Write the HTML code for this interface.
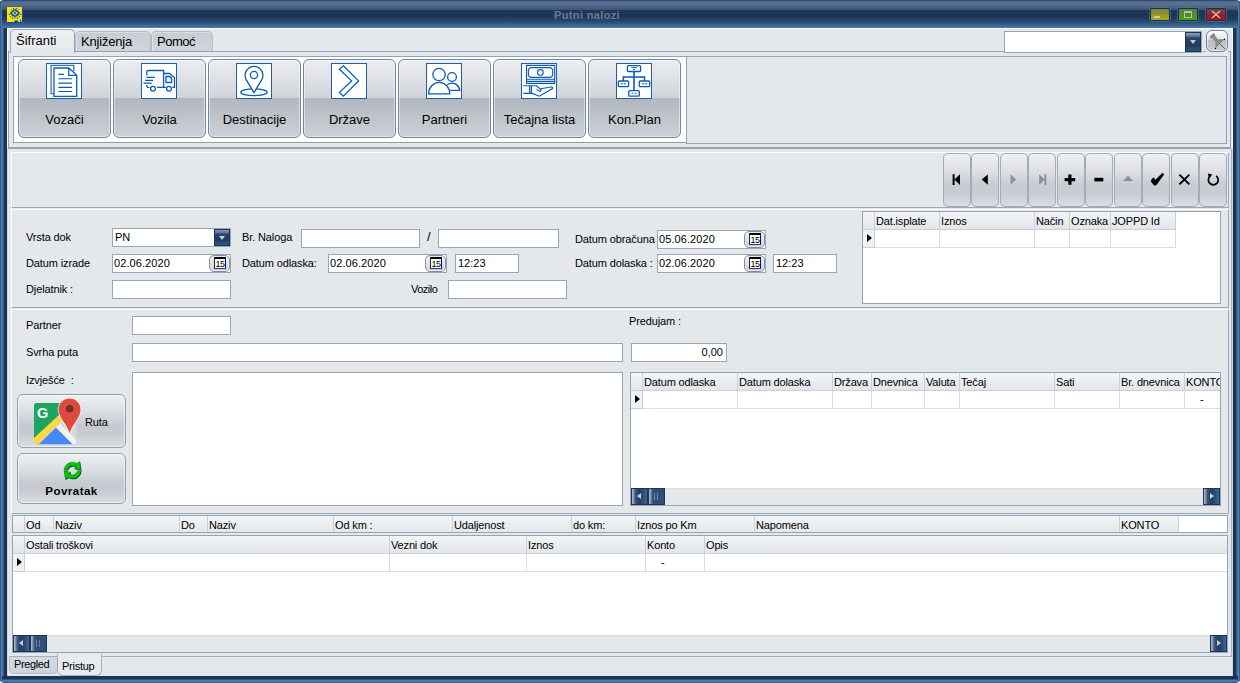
<!DOCTYPE html>
<html><head><meta charset="utf-8"><title>Putni nalozi</title>
<style>
*{box-sizing:border-box;margin:0;padding:0}
html,body{width:1240px;height:683px;overflow:hidden;background:#fff}
body{font-family:"Liberation Sans",sans-serif;font-size:11px;color:#000;position:relative}
.a{position:absolute}
.t{position:absolute;white-space:nowrap;line-height:13px;height:13px;letter-spacing:-.12px}
#under{left:0;top:0;width:1240px;height:683px;border-radius:5px 5px 5px 5px/2px 2px 3px 3px;background:#24416a}
#win{left:0;top:0;width:1240px;height:683px;border-radius:5px;
 background:linear-gradient(90deg,#35608c 0,#35608c 1px,#4a7ba5 1px,#4a7ba5 3px,#2f5580 3px,#2f5580 4px,#1f3358 4px,#1f3358 1236px,#2f5580 1236px,#2f5580 1237px,#4a7ba5 1237px,#4a7ba5 1239px,#35608c 1239px)}
#title{left:2px;top:0;width:1236px;height:28px;border-radius:4px 4px 0 0;
 background:linear-gradient(180deg,#2b4b73 0,#2b4b73 1px,#52698a 1.5px,#5b7393 4px,#4a6383 7px,#3d5676 9.5px,#20365a 10px,#1f3558 16px,#243e63 19px,#2c4c75 22px,#3a628d 25px,#4a7ba6 28px)}
#bot{left:2px;top:676px;width:1236px;height:7px;border-radius:0 0 4px 4px;background:linear-gradient(180deg,#1f3358 0,#1f3358 3px,#2f5580 3px,#2f5580 4px,#4a7ba5 4px,#4a7ba5 6px,#35608c 6px)}
#client{left:7px;top:28px;width:1226px;height:648px;background:#e4e8eb;border-top:1px solid #fff}
.inp{position:absolute;background:#fff;border:1px solid #9aa7b8;height:19px}
.inp span{position:absolute;left:2px;top:2px;line-height:13px;white-space:nowrap}
.tab{position:absolute;border:1px solid #93a3b8;border-bottom:none;border-radius:5px 5px 0 0;font-size:13px}
.tab span{position:absolute;top:4px;line-height:15px;white-space:nowrap}
.tab.on{background:linear-gradient(180deg,#eef0f2,#e4e8eb)}
.tab.off{background:linear-gradient(180deg,#c7ccd4,#d1d5db);border-color:#b4bdc9;box-shadow:inset 1px 1px 0 rgba(255,255,255,.35)}
.rb{position:absolute;top:59px;width:93px;height:79px;border:1px solid #74869f;border-radius:6px;
 background:linear-gradient(180deg,#eceef0 0,#d0d4da 37.5px,#b2b7bf 38px,#cdd1d7 78px);box-shadow:inset 0 0 0 1px rgba(255,255,255,.45)}
.rb .ic{position:absolute;left:27px;top:3px;width:36px;height:36px;background:#fff;border:1px solid #1c5fae}
.rb .ic svg{position:absolute;left:-1px;top:-1px}
.rb .lb{position:absolute;left:0;width:91px;top:52px;text-align:center;font-size:13px;line-height:15px;white-space:nowrap}
.nb{position:absolute;top:153px;width:28px;height:54px;border:1px solid #a3adba;border-radius:5px;
 background:linear-gradient(180deg,#eff0f2 0,#dfe1e5 30%,#c9cdd3 58%,#c8ccd2 75%,#dadde1 100%)}
.nb svg{position:absolute;left:-1px;top:-1px}
.pnl{position:absolute;border:1px solid;border-color:#fff #9aa8b8 #9aa8b8 #fff}
.grid{position:absolute;overflow:hidden;background:#fff;border:1px solid #93a3b8}
.gh{position:absolute;height:18px;background:linear-gradient(180deg,#f4f5f7,#e2e6ea);border-right:1px solid #c9d0da;border-bottom:1px solid #c9d0da}
.gh span{position:absolute;left:1px;top:3px;line-height:13px;white-space:nowrap;letter-spacing:-.15px}
.gc{position:absolute;height:18px;border-right:1px solid #d8dde4;border-bottom:1px solid #d8dde4}
.gc.ind{background:#f0f2f4;border-color:#c9d0da}
.arr{position:absolute;left:4px;top:22px;width:0;height:0;border:4.5px solid transparent;border-left:5px solid #000;border-right:none}
.sb{position:absolute;height:17px;background:linear-gradient(180deg,#d5dae0 0,#e4e8eb 2px)}
.sbb{position:absolute;top:0;height:17px;border:1px solid #1f3358;background:linear-gradient(90deg,#b4c0d0 0,#8296b2 1.5px,#3a5678 3.5px,#233c60 7px,#2c4d75 11px,#3c6893 15px)}
.sbb.th{background:linear-gradient(90deg,#b4c0d0 0,#8296b2 1.5px,#3a5678 3.5px,#2f4f77 6px,#2f4f77 15px)}
.btn{position:absolute;border:1px solid #919dad;border-radius:6px;background:linear-gradient(180deg,#eff0f2 0,#dcdfe3 30%,#c6cad0 60%,#c8ccd2 75%,#dadde1 100%);box-shadow:inset 0 0 0 1px rgba(255,255,255,.5)}
.cal{position:absolute;right:0px;top:0px;width:21px;height:17px;border:1px solid #7f8da0;border-radius:5px;background:linear-gradient(180deg,#f4f5f6,#c9cdd3);box-shadow:inset 0 0 0 1px #e8eaed}
.cal svg{position:absolute;left:4px;top:1px}
.dd{position:absolute;right:0;top:0;width:16px;height:17px;border:1px solid #1f3358;background:linear-gradient(180deg,#8296b2 0,#5a7496 3px,#2a4468 4px,#213a5e 10px,#2f5f8d 15px)}
.dd:after{content:"";position:absolute;left:4px;top:6px;border:3.5px solid transparent;border-top:4px solid #c9d0dc;border-bottom:none}
.sbb b{position:absolute;display:block}
.sbb .al{left:5px;top:4px;border:3.5px solid transparent;border-right:4px solid #c5cbd8;border-left:none}
.sbb .ar{left:6px;top:4px;border:3.5px solid transparent;border-left:4px solid #c5cbd8;border-right:none}
.sbb .gr{left:5px;top:4px;width:4px;height:7px;border-left:1px solid #6d7f9c;border-right:1px solid #6d7f9c}
.wb{position:absolute;top:8px;width:20px;height:13px;border:1px solid #1b2f4f;box-shadow:0 0 0 1px rgba(90,120,155,.55);border-radius:1px}
.wb i{position:absolute;display:block}
</style></head><body>
<div id="under" class="a"></div><div id="win" class="a"></div><div id="title" class="a"></div><div id="bot" class="a"></div><div id="client" class="a"></div>
<div class="t" style="left:554px;top:9px;font-weight:bold;color:#6b7b8d;font-size:11px;letter-spacing:.36px">Putni nalozi</div>
<svg class="a" style="left:7px;top:7px" width="16" height="16" viewBox="0 0 16 16"><rect width="16" height="16" fill="#ffe400"/><path d="M15.5,0V15.5H0" stroke="#0a49c8" fill="none"/><g fill="#0b50cc"><path d="M8,2L13.4,5.8L8,10.4L2.6,5.8Z"/><path d="M5,3.4L8,1.6L11,3.4L12.6,7.4L10.4,9.6L5.6,9.6L3.4,7.4Z" fill-opacity=".75"/><circle cx="6.5" cy="1.4" r=".6"/><circle cx="9.6" cy="1.4" r=".6"/><circle cx="4.4" cy="2.6" r=".5"/><circle cx="11.6" cy="2.6" r=".5"/><circle cx="2.2" cy="7.4" r=".7"/><circle cx="13.8" cy="7.4" r=".7"/><circle cx="3.6" cy="9.6" r=".7"/><circle cx="12.4" cy="9.6" r=".7"/><circle cx="5.6" cy="11.2" r=".8"/><circle cx="10.4" cy="11.2" r=".8"/><circle cx="8" cy="11" r=".6"/></g><path d="M8,3.6L11.2,5.9L8,8.6L4.8,5.9Z" fill="#ffe400"/><path d="M8,4.6L9.6,5.9L8,7.3L6.4,5.9Z" fill="#0b50cc"/><rect x="7.5" y="13.4" width="3.6" height="1.6" fill="#0a49c8"/><rect x="13" y="12.6" width="1.2" height="2.6" fill="#0a49c8"/></svg>
<div class="wb" style="left:1150px;background:linear-gradient(180deg,#7f8548 0,#878b3a 5px,#9b991f 5.5px,#aaa519 11px)"><i style="left:3px;top:7px;width:6px;height:2px;background:#c6c6ae"></i></div>
<div class="wb" style="left:1178px;background:linear-gradient(180deg,#5f7f4b 0,#58823a 5px,#4c9120 5.5px,#4e9d18 11px)"><i style="left:5px;top:2px;width:8px;height:7px;border:1px solid #b4c4a3;border-top-width:2px"></i></div>
<div class="wb" style="left:1206px;background:linear-gradient(180deg,#7c4042 0,#813436 5px,#961f22 5.5px,#a6191b 11px)"><svg width="18" height="11" style="position:absolute;left:0;top:0"><path d="M5,2L13,9M13,2L5,9" stroke="#d6bebe" stroke-width="1.4"/></svg></div>
<div class="a" style="left:7px;top:28px;width:1px;height:120px;background:#fff"></div>
<div class="a" style="left:1232px;top:28px;width:1px;height:120px;background:#f4f6f7"></div>
<div class="a" style="left:7px;top:149px;width:1px;height:527px;background:#cdd4dc"></div>
<div class="a" style="left:1232px;top:149px;width:1px;height:527px;background:#cdd4dc"></div>
<div class="a" style="left:1231px;top:149px;width:1px;height:508px;background:#a3afc0"></div>
<div class="a" style="left:8px;top:51px;width:996px;height:1px;background:#93a3b8"></div>
<div class="a" style="left:1203px;top:51px;width:3px;height:1px;background:#93a3b8"></div>
<div class="a" style="left:1228px;top:51px;width:3px;height:1px;background:#93a3b8"></div>
<div class="a" style="left:8px;top:51px;width:1px;height:97px;background:#93a3b8"></div>
<div class="a" style="left:1230px;top:51px;width:1px;height:97px;background:#93a3b8"></div>
<div class="a" style="left:8px;top:147px;width:1223px;height:2px;background:#93a3b8"></div>
<div class="tab off" style="left:75px;top:31px;width:76px;height:20px"><span style="left:5px;top:2px;letter-spacing:-.2px">Knjiženja</span></div>
<div class="tab off" style="left:151px;top:31px;width:62px;height:20px"><span style="left:5px;top:2px;letter-spacing:-.5px">Pomoć</span></div>
<div class="tab on" style="left:10px;top:29px;width:65px;height:24px"><span style="left:5px;top:3px">Šifranti</span></div>
<div class="a" style="left:1004px;top:31px;width:198px;height:22px;background:#fff;border:1px solid #93a3b8"></div>
<div class="a" style="left:1185px;top:32px;width:16px;height:20px;border:1px solid #1f3358;background:linear-gradient(180deg,#8ea1bb 0,#5f7a9c 3px,#2a4468 5px,#213a5e 12px,#35597f 19px)"></div>
<div class="a" style="left:1190px;top:40px;width:0;height:0;border:3.5px solid transparent;border-top:4px solid #c9d0dc;border-bottom:none"></div>
<div class="a" style="left:1206px;top:30px;width:22px;height:22px;border:1px solid #6b82a0;border-radius:6px;background:linear-gradient(180deg,#fafbfb 0,#e4e6e9 8px,#b9bec6 9px,#c9cdd3 20px);box-shadow:inset 0 0 0 1px rgba(255,255,255,.6)"></div>
<svg class="a" style="left:1206px;top:30px" width="22" height="22" viewBox="1206 30 22 22"><path d="M1220,44L1225,49" stroke="#555" stroke-width="1"/><path d="M1209.2,37L1213.6,33L1215.3,34.6L1215,35.6L1217.7,39.3L1224.4,39.3L1215.5,48.4L1215.3,41.6L1211.8,38.6L1210.8,38.7Z" fill="#8a8a8a"/><circle cx="1224.4" cy="39.3" r=".7" fill="#000"/><circle cx="1215.5" cy="48.4" r=".7" fill="#000"/></svg>
<div class="a" style="left:13px;top:56px;width:674px;height:87px;background:#fff;border:1px solid #93a3b8;border-bottom-color:#9a9a9a"></div>
<div class="a" style="left:686px;top:56px;width:541px;height:88px;border:1px solid #93a3b8"></div>
<div class="rb" style="left:18px"><div class="ic"><svg width="36" height="36" viewBox="0 0 36 36" fill="none" stroke="#0d5bb0" stroke-width="1.3"><path d="M8,30.7H5.1V2.3H27.8V8" stroke-opacity=".85"/><path d="M8,5H22.8L30.7,12.4V33.3H8Z" fill="#fff"/><path d="M22.8,5V12.4H30.7" /><path d="M12.4,11.4H18M12.4,15.8H26M12.4,20.1H26M12.4,24.4H26M12.4,28.5H26" stroke-width="1.1"/></svg></div><div class="lb">Vozači</div></div>
<div class="rb" style="left:113px"><div class="ic"><svg width="36" height="36" viewBox="0 0 36 36" fill="none" stroke="#0d5bb0" stroke-width="1.3"><path d="M5.8,12.6V9Q5.8,7.5 7.3,7.5H22.6V24.3"/><path d="M5.5,14.3H13.8M4,17.3H12.2M2.5,20.2H10.6"/><path d="M5.8,22V23.3Q5.8,24.3 6.8,24.3H8.5"/><circle cx="12" cy="25.8" r="2.4"/><circle cx="28" cy="25.8" r="2.4"/><path d="M16,24.3H25"/><path d="M22.6,10.5H28.5L33.5,14.5V24.3H31.3"/><path d="M25,13.5H28.3Q30.6,14 30.6,16.5V19.5H25Z"/></svg></div><div class="lb">Vozila</div></div>
<div class="rb" style="left:208px"><div class="ic"><svg width="36" height="36" viewBox="0 0 36 36" fill="none" stroke="#0d5bb0" stroke-width="1.3"><ellipse cx="18" cy="29.3" rx="13.2" ry="3.4"/><path d="M18,29.6L10.3,16.8A8.9,8.9 0 1 1 25.7,16.8Z" fill="#fff"/><circle cx="18" cy="12" r="3.6"/></svg></div><div class="lb">Destinacije</div></div>
<div class="rb" style="left:303px"><div class="ic"><svg width="36" height="36" viewBox="0 0 36 36" fill="none" stroke="#0d5bb0" stroke-width="1.3"><path d="M12.4,2.8L27.5,17.9L12.4,33.2L8.4,29.4L20.6,17.9L8.4,6.3Z"/></svg></div><div class="lb">Države</div></div>
<div class="rb" style="left:398px"><div class="ic"><svg width="36" height="36" viewBox="0 0 36 36" fill="none" stroke="#0d5bb0" stroke-width="1.3"><circle cx="26" cy="14" r="4.4"/><path d="M21.3,21.6Q26,18.6 30.2,21.4Q33.5,23.8 33.8,27.3H24.2"/><circle cx="13.05" cy="11.5" r="6.2" fill="#fff"/><path d="M2.6,30.8A10.6,11.4 0 0 1 23.8,30.8Z" fill="#fff"/></svg></div><div class="lb">Partneri</div></div>
<div class="rb" style="left:493px"><div class="ic"><svg width="36" height="36" viewBox="0 0 36 36" fill="none" stroke="#0d5bb0" stroke-width="1.15"><path d="M5.5,2.4H33.7V20.4H5.5ZM5.5,16.2H33.7M5.5,18.3H33.7"/><path d="M9.4,4.6H29.7L31.7,6.6V12.4L29.7,14.4H9.4L7.4,12.4V6.6Z"/><circle cx="19.4" cy="9.4" r="2.8"/><path d="M2.2,22.7H15.4L19.6,26.2Q20.6,27.6 19.2,28.3Q18,28.6 15.6,26.2M2.2,30.4H11.4L18.3,33.2L31.5,25.6Q31.8,23.6 29.6,24L20,25.8M8.7,22.7V30.4M10.4,22.7V30.4"/></svg></div><div class="lb">Tečajna lista</div></div>
<div class="rb" style="left:588px"><div class="ic"><svg width="36" height="36" viewBox="0 0 36 36" fill="none" stroke="#0d5bb0" stroke-width="1.3"><rect x="11.4" y="2.6" width="13.2" height="5.9" rx="1"/><path d="M15.4,4.6H21M17,6.5H19" stroke-width="1"/><path d="M18,8.5V27.6M7.4,18V14H28.5V18" stroke-width="1.6"/><rect x="2.3" y="18" width="10.3" height="5.7" rx="1"/><rect x="23.3" y="18" width="10.4" height="5.7" rx="1"/><rect x="12.8" y="27.6" width="10.5" height="5.6" rx="1"/><path d="M5,20.8H10M26,20.8H31M15.5,30.4H20.5" stroke-width="1.4" stroke-opacity=".7" stroke-dasharray="2 1"/></svg></div><div class="lb">Kon.Plan</div></div>
<div class="pnl" style="left:11px;top:152px;width:1218px;height:56px"></div>
<div class="pnl" style="left:11px;top:209px;width:1218px;height:99px"></div>
<div class="pnl" style="left:11px;top:309px;width:1218px;height:205px"></div>
<div class="nb" style="left:943px"><svg width="28" height="54"><rect x="9.6" y="21.2" width="2" height="10.8" fill="#000"/><path d="M11.4,26.6L17,21.2V32Z" fill="#000"/></svg></div>
<div class="nb" style="left:971px"><svg width="28" height="54"><path d="M10.7,26.6L16.8,21.4V31.8Z" fill="#000"/></svg></div>
<div class="nb" style="left:1000px"><svg width="28" height="54"><path d="M16.2,26.6L10.6,21.4V31.8Z" fill="#8b9097"/></svg></div>
<div class="nb" style="left:1028px"><svg width="28" height="54"><rect x="16.4" y="21.2" width="1.8" height="10.8" fill="#8b9097"/><path d="M16.6,26.6L11.2,21.2V32Z" fill="#8b9097"/></svg></div>
<div class="nb" style="left:1057px"><svg width="28" height="54"><path d="M7.6,26.7H18.2M12.9,21.6V31.8" stroke="#000" stroke-width="3.2"/></svg></div>
<div class="nb" style="left:1085px"><svg width="28" height="54"><rect x="9.3" y="24.8" width="9" height="3.6" fill="#000"/></svg></div>
<div class="nb" style="left:1114px"><svg width="28" height="54"><path d="M14,22.4L19,28H9Z" fill="#8b9097"/></svg></div>
<div class="nb" style="left:1142px"><svg width="28" height="54"><polygon points="9.3,27.2 11.5,24.7 13.3,27.2 20.4,20.3 21.8,21.3 14.4,31.7 12.2,32.2 9.4,28.8" fill="#000" stroke="#000" stroke-width=".7" stroke-linejoin="round"/></svg></div>
<div class="nb" style="left:1171px"><svg width="28" height="54"><path d="M8.4,21.6L18.4,31.4M18.4,21.6L8.4,31.4" stroke="#000" stroke-width="1.9"/></svg></div>
<div class="nb" style="left:1199px"><svg width="28" height="54"><path d="M17.1,22.9A4.9,4.9 0 1 1 11.5,22.9" stroke="#000" stroke-width="1.7" fill="none"/><path d="M8.8,20.6L13.4,21.4L10.0,25.2Z" fill="#000"/></svg></div>
<div class="t" style="left:26px;top:231px;">Vrsta dok</div>
<div class="inp" style="left:112px;top:228px;width:119px;height:19px"><span>PN</span><div class="dd"></div></div>
<div class="t" style="left:242px;top:231px;">Br. Naloga</div>
<div class="inp" style="left:301px;top:229px;width:119px;height:19px"></div>
<div class="t" style="left:427px;top:230px;font-size:13px">/</div>
<div class="inp" style="left:438px;top:229px;width:121px;height:19px"></div>
<div class="t" style="left:575px;top:233px;">Datum obračuna</div>
<div class="inp" style="left:657px;top:230px;width:109px;height:19px"><span style="left:1px;letter-spacing:.08px">05.06.2020</span><div class="cal"><svg width="12" height="12"><rect x="0" y="0" width="12" height="12" fill="#fff"/><rect width="12" height="2" fill="#000"/><rect width="1" height="12" fill="#222"/><rect x="11" y="1" width="1" height="11" fill="#0a0a90"/><rect x="0" y="11" width="12" height="1" fill="#33337a"/><text x="6" y="10" font-size="9" text-anchor="middle" font-family="Liberation Sans,sans-serif" letter-spacing="-0.6">15</text></svg></div></div>
<div class="t" style="left:26px;top:257px;">Datum izrade</div>
<div class="inp" style="left:112px;top:254px;width:119px;height:19px"><span style="left:1px;letter-spacing:.08px">02.06.2020</span><div class="cal"><svg width="12" height="12"><rect x="0" y="0" width="12" height="12" fill="#fff"/><rect width="12" height="2" fill="#000"/><rect width="1" height="12" fill="#222"/><rect x="11" y="1" width="1" height="11" fill="#0a0a90"/><rect x="0" y="11" width="12" height="1" fill="#33337a"/><text x="6" y="10" font-size="9" text-anchor="middle" font-family="Liberation Sans,sans-serif" letter-spacing="-0.6">15</text></svg></div></div>
<div class="t" style="left:242px;top:257px;">Datum odlaska:</div>
<div class="inp" style="left:328px;top:254px;width:119px;height:19px"><span style="left:1px;letter-spacing:.08px">02.06.2020</span><div class="cal"><svg width="12" height="12"><rect x="0" y="0" width="12" height="12" fill="#fff"/><rect width="12" height="2" fill="#000"/><rect width="1" height="12" fill="#222"/><rect x="11" y="1" width="1" height="11" fill="#0a0a90"/><rect x="0" y="11" width="12" height="1" fill="#33337a"/><text x="6" y="10" font-size="9" text-anchor="middle" font-family="Liberation Sans,sans-serif" letter-spacing="-0.6">15</text></svg></div></div>
<div class="inp" style="left:455px;top:254px;width:64px;height:19px"><span>12:23</span></div>
<div class="t" style="left:575px;top:257px;">Datum dolaska :</div>
<div class="inp" style="left:657px;top:254px;width:109px;height:19px"><span style="left:1px;letter-spacing:.08px">02.06.2020</span><div class="cal"><svg width="12" height="12"><rect x="0" y="0" width="12" height="12" fill="#fff"/><rect width="12" height="2" fill="#000"/><rect width="1" height="12" fill="#222"/><rect x="11" y="1" width="1" height="11" fill="#0a0a90"/><rect x="0" y="11" width="12" height="1" fill="#33337a"/><text x="6" y="10" font-size="9" text-anchor="middle" font-family="Liberation Sans,sans-serif" letter-spacing="-0.6">15</text></svg></div></div>
<div class="inp" style="left:773px;top:254px;width:64px;height:19px"><span>12:23</span></div>
<div class="t" style="left:26px;top:283px;">Djelatnik :</div>
<div class="inp" style="left:112px;top:280px;width:119px;height:19px"></div>
<div class="t" style="left:411px;top:283px;letter-spacing:-.5px">Vozilo</div>
<div class="inp" style="left:448px;top:280px;width:119px;height:19px"></div>
<div class="t" style="left:26px;top:319px;">Partner</div>
<div class="inp" style="left:132px;top:316px;width:99px;height:19px"></div>
<div class="t" style="left:629px;top:315px;">Predujam :</div>
<div class="t" style="left:26px;top:346px;">Svrha puta</div>
<div class="inp" style="left:132px;top:343px;width:491px;height:19px"></div>
<div class="inp" style="left:631px;top:343px;width:96px;height:19px"><span style="left:auto;right:3px">0,00</span></div>
<div class="t" style="left:26px;top:374px;">Izvješće&nbsp; :</div>
<div class="inp" style="left:132px;top:372px;width:491px;height:134px"></div>
<div class="grid" style="left:862px;top:211px;width:359px;height:93px;border-color:#93a3b8">
<div class="gh" style="left:0px;top:0;width:12px"><span></span></div><div class="gc ind" style="left:0px;top:18px;width:12px"></div>
<div class="gh" style="left:12px;top:0;width:65px"><span>Dat.isplate</span></div><div class="gc" style="left:12px;top:18px;width:65px"></div>
<div class="gh" style="left:77px;top:0;width:95px"><span>Iznos</span></div><div class="gc" style="left:77px;top:18px;width:95px"></div>
<div class="gh" style="left:172px;top:0;width:35px"><span>Način</span></div><div class="gc" style="left:172px;top:18px;width:35px"></div>
<div class="gh" style="left:207px;top:0;width:41px"><span>Oznaka</span></div><div class="gc" style="left:207px;top:18px;width:41px"></div>
<div class="gh" style="left:248px;top:0;width:65px"><span>JOPPD Id</span></div><div class="gc" style="left:248px;top:18px;width:65px"></div>
<div class="arr"></div>
</div>
<div class="grid" style="left:630px;top:372px;width:591px;height:134px;border-color:#93a3b8">
<div class="gh" style="left:0px;top:0;width:12px"><span></span></div><div class="gc ind" style="left:0px;top:18px;width:12px"></div>
<div class="gh" style="left:12px;top:0;width:95px"><span>Datum odlaska</span></div><div class="gc" style="left:12px;top:18px;width:95px"></div>
<div class="gh" style="left:107px;top:0;width:95px"><span>Datum dolaska</span></div><div class="gc" style="left:107px;top:18px;width:95px"></div>
<div class="gh" style="left:202px;top:0;width:39px"><span>Država</span></div><div class="gc" style="left:202px;top:18px;width:39px"></div>
<div class="gh" style="left:241px;top:0;width:53px"><span>Dnevnica</span></div><div class="gc" style="left:241px;top:18px;width:53px"></div>
<div class="gh" style="left:294px;top:0;width:35px"><span>Valuta</span></div><div class="gc" style="left:294px;top:18px;width:35px"></div>
<div class="gh" style="left:329px;top:0;width:95px"><span>Tečaj</span></div><div class="gc" style="left:329px;top:18px;width:95px"></div>
<div class="gh" style="left:424px;top:0;width:65px"><span>Sati</span></div><div class="gc" style="left:424px;top:18px;width:65px"></div>
<div class="gh" style="left:489px;top:0;width:65px"><span>Br. dnevnica</span></div><div class="gc" style="left:489px;top:18px;width:65px"></div>
<div class="gh" style="left:554px;top:0;width:41px"><span>KONTO</span></div><div class="gc" style="left:554px;top:18px;width:41px"><span class="t" style="left:15px;top:2px">-</span></div>
<div class="arr"></div>
<div class="sb" style="left:0;bottom:0;width:589px"><div class="sbb" style="left:0;width:17px"><b class="al"></b></div><div class="sbb th" style="left:17px;width:17px"><b class="gr"></b></div><div class="sbb" style="right:0;width:17px"><b class="ar"></b></div></div>
</div>
<div class="grid" style="left:12px;top:515px;width:1216px;height:18px;border-color:#93a3b8">
<div class="gh" style="left:0px;top:0;width:12px"><span></span></div><div class="gh" style="left:12px;top:0;width:29px"><span>Od</span></div><div class="gh" style="left:41px;top:0;width:126px"><span>Naziv</span></div><div class="gh" style="left:167px;top:0;width:28px"><span>Do</span></div><div class="gh" style="left:195px;top:0;width:126px"><span>Naziv</span></div><div class="gh" style="left:321px;top:0;width:119px"><span>Od km :</span></div><div class="gh" style="left:440px;top:0;width:119px"><span>Udaljenost</span></div><div class="gh" style="left:559px;top:0;width:64px"><span>do km:</span></div><div class="gh" style="left:623px;top:0;width:119px"><span>Iznos po Km</span></div><div class="gh" style="left:742px;top:0;width:365px"><span>Napomena</span></div><div class="gh" style="left:1107px;top:0;width:59px"><span>KONTO</span></div></div>
<div class="grid" style="left:12px;top:535px;width:1216px;height:118px;border-color:#93a3b8">
<div class="gh" style="left:0px;top:0;width:12px"><span></span></div><div class="gc ind" style="left:0px;top:18px;width:12px"></div>
<div class="gh" style="left:12px;top:0;width:365px"><span>Ostali troškovi</span></div><div class="gc" style="left:12px;top:18px;width:365px"></div>
<div class="gh" style="left:377px;top:0;width:137px"><span>Vezni dok</span></div><div class="gc" style="left:377px;top:18px;width:137px"></div>
<div class="gh" style="left:514px;top:0;width:119px"><span>Iznos</span></div><div class="gc" style="left:514px;top:18px;width:119px"></div>
<div class="gh" style="left:633px;top:0;width:59px"><span>Konto</span></div><div class="gc" style="left:633px;top:18px;width:59px"><span class="t" style="left:15px;top:2px">-</span></div>
<div class="gh" style="left:692px;top:0;width:523px"><span>Opis</span></div><div class="gc" style="left:692px;top:18px;width:523px"></div>
<div class="arr"></div>
<div class="sb" style="left:0;bottom:0;width:1214px"><div class="sbb" style="left:0;width:17px"><b class="al"></b></div><div class="sbb th" style="left:17px;width:17px"><b class="gr"></b></div><div class="sbb" style="right:0;width:17px"><b class="ar"></b></div></div>
</div>
<div class="btn" style="left:17px;top:394px;width:109px;height:54px"></div>
<div class="t" style="left:85px;top:416px;">Ruta</div>
<div class="btn" style="left:17px;top:453px;width:109px;height:51px"></div>
<div class="t" style="left:17px;top:484px;width:109px;text-align:center;font-weight:bold;font-size:11.6px;letter-spacing:.42px">Povratak</div>
<div class="a" style="left:101px;top:656px;width:1130px;height:1px;background:#a3afc0"></div>
<div class="a" style="left:9px;top:656px;width:49px;height:18px;border:1px solid #b4bdc9;border-top:1px solid #a3afc0;border-radius:0 0 5px 5px;background:linear-gradient(180deg,#d6dadf,#cfd4da)"></div>
<div class="t" style="left:14px;top:658px;letter-spacing:-.4px">Pregled</div>
<div class="a" style="left:57px;top:654px;width:45px;height:22px;border:1px solid #a3afc0;border-top:none;border-radius:0 0 6px 6px;background:#e9ecef"></div>
<div class="t" style="left:62px;top:660px;letter-spacing:-.25px">Pristup</div>
<svg class="a" style="left:30px;top:398px" width="56" height="50" viewBox="30 398 56 50">
<defs><clipPath id="mc"><rect x="34" y="403" width="42.4" height="41.4" rx="3"/></clipPath></defs>
<g clip-path="url(#mc)"><rect x="34" y="403" width="43" height="42" fill="#d9d9d9"/><path d="M34,403H77V403L34,440Z" fill="#1ea362"/><path d="M34,438L60,414L64,418.5L38,444.6H34Z" fill="#fbd646"/><path d="M38.5,444.6L56,427.5L73,444.6Z" fill="#4688f4"/><path d="M56,427.5L60,423.5L76.4,440V444.6H73Z" fill="#f1f1f1"/></g>
<text x="37" y="417.6" font-family="Liberation Sans,sans-serif" font-weight="bold" font-size="14.5" fill="#fff">G</text>
<path d="M69.6,434.2C67.6,425 58.4,418 58.4,409.6A11.2,11.2 0 0 1 80.8,409.6C80.8,418 71.6,425 69.6,434.2Z" fill="#fff" fill-opacity=".75" stroke="#fff" stroke-width="1.6" stroke-opacity=".6"/>
<path d="M69.6,433.6C67.6,425 58.6,418 58.6,409.6A11,11 0 0 1 80.6,409.6C80.6,418 71.6,425 69.6,433.6Z" fill="#dd4b3e"/><circle cx="69.6" cy="408.8" r="3.8" fill="#7d2a27"/></svg>
<svg class="a" style="left:63px;top:461px" width="20" height="20" viewBox="63 461 20 20"><g transform="translate(.6,.7)" fill="#0a1a6a"><path d="M64.1,469.9A8.4,8.4 0 0 1 77,463.6L79.6,461.6L80.9,470L74.6,468.6L75.3,466.3A5.7,5.7 0 0 0 67.4,469.9Z"/><path d="M80.9,470.9A8.4,8.4 0 0 1 68,477.2L65.4,479.2L64.1,470.8L70.4,472.2L69.7,474.5A5.7,5.7 0 0 0 77.6,470.9Z"/></g><g fill="#00c800" stroke="#007a00" stroke-width=".5"><path d="M64.1,469.9A8.4,8.4 0 0 1 77,463.6L79.6,461.6L80.9,470L74.6,468.6L75.3,466.3A5.7,5.7 0 0 0 67.4,469.9Z"/><path d="M80.9,470.9A8.4,8.4 0 0 1 68,477.2L65.4,479.2L64.1,470.8L70.4,472.2L69.7,474.5A5.7,5.7 0 0 0 77.6,470.9Z"/></g></svg>
</body></html>
